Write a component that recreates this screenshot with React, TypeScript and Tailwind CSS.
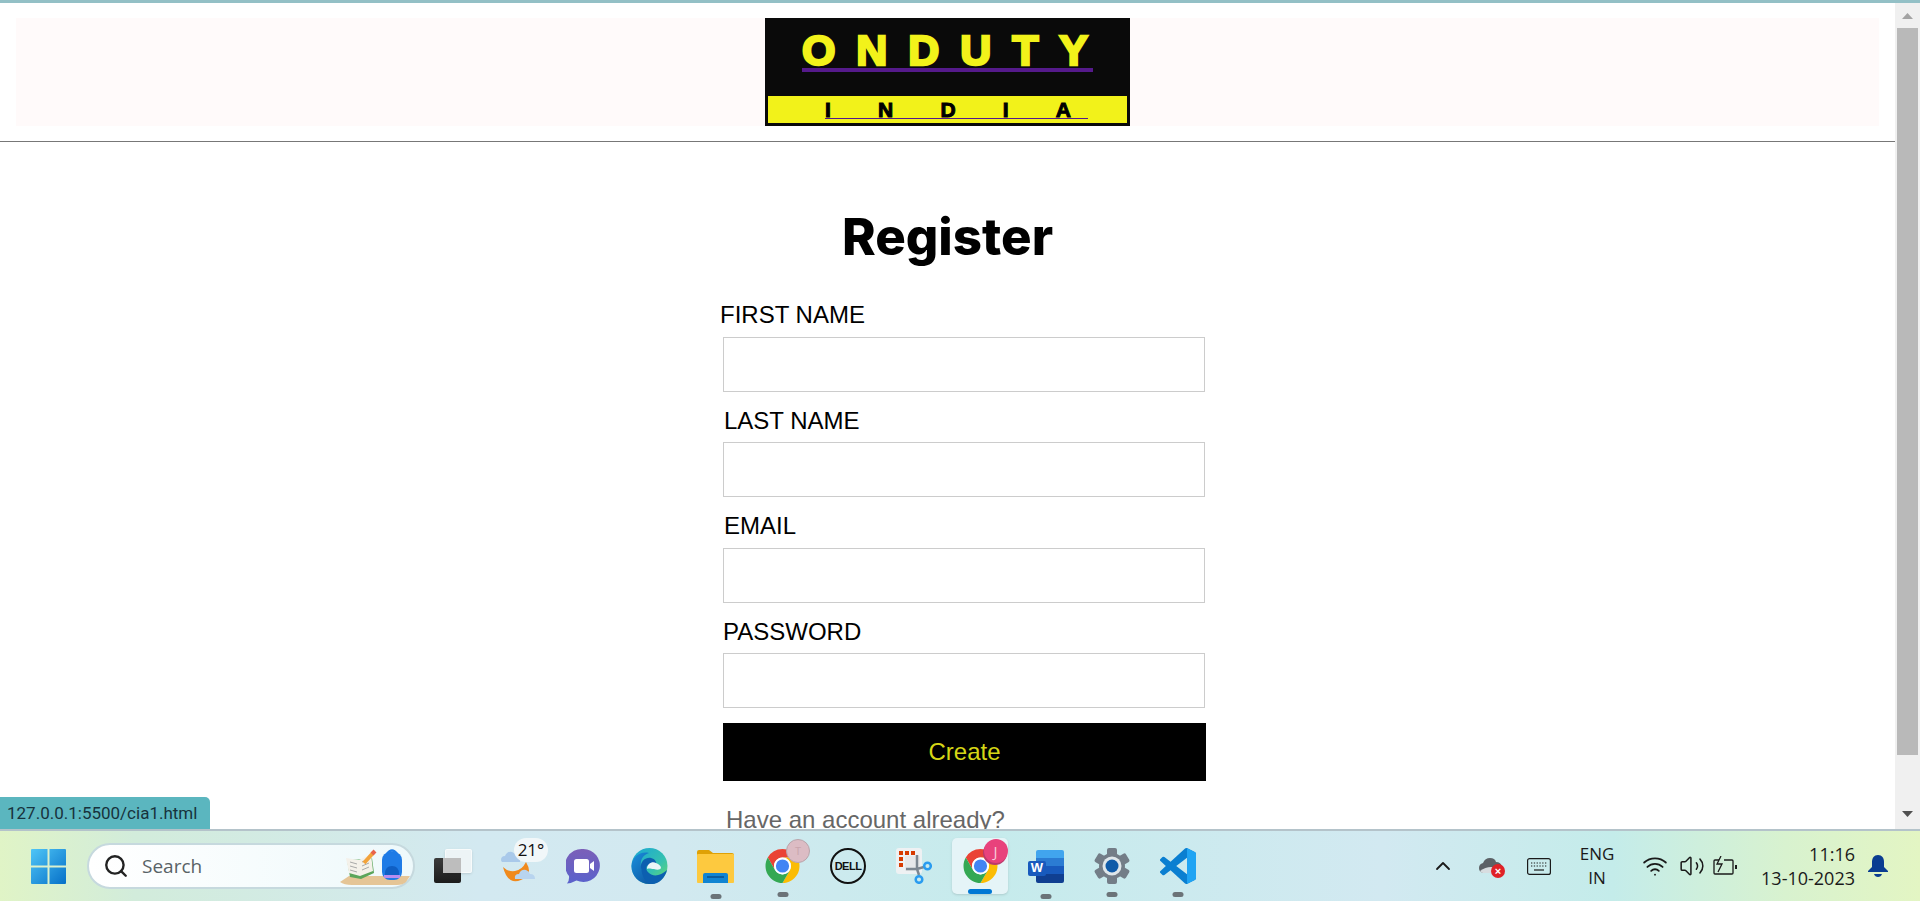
import { ChevronUp, Search, Volume2, Wifi } from 'lucide-react'
import type { ReactNode } from 'react'

const fields = [
  { label: 'FIRST NAME', labelClass: '-ml-[3px] mb-2' },
  { label: 'LAST NAME', labelClass: 'ml-px mt-px mb-[7px]' },
  { label: 'EMAIL', labelClass: 'ml-px mb-2' },
  { label: 'PASSWORD', labelClass: 'mt-px mb-[7px]' },
]

function ChromeIcon() {
  return (
    <svg viewBox="0 0 36 36" className="w-full h-full">
      <path fill="#ea4335" d="M18 1a17 17 0 0 1 14.72 8.5H18a8.5 8.5 0 0 0-7.36 12.75L3.28 9.5A17 17 0 0 1 18 1z" />
      <path fill="#fbbc04" d="M32.72 9.5A17 17 0 0 1 18 35l7.36-12.75A8.5 8.5 0 0 0 18 9.5z" />
      <path fill="#34a853" d="M3.28 9.5l7.36 12.75a8.5 8.5 0 0 0 14.72 0L18 35A17 17 0 0 1 3.28 9.5z" />
      <circle cx="18" cy="18" r="8.5" fill="#fff" />
      <circle cx="18" cy="18" r="6.6" fill="#4285f4" />
    </svg>
  )
}

function WindowsIcon() {
  return (
    <svg viewBox="0 0 35 35" className="w-[35px] h-[35px]">
      <defs>
        <linearGradient id="win" x1="0" y1="0" x2="1" y2="1">
          <stop offset="0" stopColor="#4fc6f7" />
          <stop offset="1" stopColor="#0670c8" />
        </linearGradient>
      </defs>
      <path fill="url(#win)" d="M1 0h15.5v16.5H0V1a1 1 0 0 1 1-1zM18.5 0H34a1 1 0 0 1 1 1v15.5H18.500zM0 18.500h16.500V35H1a1 1 0 0 1-1-1zM18.500 18.500H35V34a1 1 0 0 1-1 1H18.500z" />
    </svg>
  )
}

function SearchArt() {
  return (
    <svg viewBox="0 0 70 40" className="absolute right-[3px] top-[3px] w-[70px] h-[40px]">
      <path fill="#e5c596" d="M0 34 9 28h61l-4 6q-3 3-9 3H12Q4 37 0 34z" />
      <path fill="#5ba55b" d="M7 12l3 17 11 2 13-6-2-15-2 1z" />
      <path fill="#f4f1ea" d="M6 10l13 2 12-6 2 17-13 5-11-3z" />
      <path stroke="#a9a9a9" strokeWidth="1" fill="none" d="M10 14l7 2M10 18l7 2M10 22l7 2M22 14l7-3M22 18l7-3M22 22l7-3" />
      <path stroke="#f2a33c" strokeWidth="4" d="M24 15 33 5" />
      <path stroke="#e8644c" strokeWidth="4" d="M32 6l3-3" />
      <rect x="42" y="4" width="20" height="28" rx="8" fill="#1e7be6" />
      <path d="M47 6q5-7 10 0" fill="none" stroke="#1e7be6" strokeWidth="2.500" />
      <path d="M45 26q0-8 7-8t7 8v3H45z" fill="#0f5fc4" />
      <rect x="44" y="27" width="16" height="3" fill="#b78df0" />
    </svg>
  )
}

function TaskView() {
  return (
    <div className="relative w-[38px] h-[34px]">
      <div className="absolute left-0 bottom-0 w-[27px] h-[25px] rounded-[2px] bg-gradient-to-b from-[#3b3b3b] to-[#1c1c1c]" />
      <div className="absolute right-0 top-0 w-[27px] h-[24px] rounded-[2px] bg-[#f4f6f7]/80 border border-white/60 shadow-sm" />
      <div className="absolute left-[9px] top-[9px] w-[18px] h-[15px] bg-[#bdbdbd]" />
    </div>
  )
}

function Weather() {
  return (
    <div className="relative w-[38px] h-[36px]">
      <svg viewBox="0 0 38 36" className="w-full h-full">
        <path fill="#f08a1d" d="M3 19Q8 24 15 23 22 22 26 14 32 24 26 29 20 34 13 33 6 31 3 19z" />
        <path fill="#a9c9ea" d="M1 12q0-4 4-4 2-5 7-4 3 1 4 4 4 0 4 4v2H2q-1-1-1-2z" />
        <path fill="#b8d4ef" d="M15 31q-1-5 4-5 2-5 7-4 3 1 4 4 5 0 5 5z" />
      </svg>
      <div className="absolute -right-[10px] -top-[10px] w-[34px] h-[24px] rounded-full bg-[#f4f8fa]/90 flex items-center justify-center text-[17px] text-[#111] font-['Open_Sans',sans-serif]">
        21°
      </div>
    </div>
  )
}

function Teams() {
  return (
    <svg viewBox="0 0 35 36" className="w-[35px] h-[36px]">
      <defs>
        <linearGradient id="teams" x1="0" y1="0" x2="0" y2="1">
          <stop offset="0" stopColor="#7b5fb8" />
          <stop offset="1" stopColor="#5a62cc" />
        </linearGradient>
      </defs>
      <path fill="url(#teams)" d="M17.500 1a16.500 16.500 0 1 1-7 31.500Q6 35 1 35.500q2.500-3 2-7.500A16.500 16.500 0 0 1 17.500 1z" />
      <rect x="8" y="11" width="15" height="14" rx="2.500" fill="#fff" />
      <path fill="#fff" d="M24 16l4-3v10l-4-3z" />
    </svg>
  )
}

function Edge() {
  return (
    <svg viewBox="0 0 37 36" className="w-[37px] h-[36px]">
      <defs>
        <linearGradient id="edgeTop" x1="0" y1="0" x2="1" y2="1">
          <stop offset="0" stopColor="#19a6d6" />
          <stop offset="0.600" stopColor="#35c1b0" />
          <stop offset="1" stopColor="#6fdc62" />
        </linearGradient>
        <linearGradient id="edgeLow" x1="0" y1="0" x2="1" y2="1">
          <stop offset="0" stopColor="#1a8fdc" />
          <stop offset="1" stopColor="#0b4d98" />
        </linearGradient>
      </defs>
      <circle cx="18.500" cy="18" r="18" fill="url(#edgeTop)" />
      <path fill="url(#edgeLow)" d="M.5 18C1 9 9 3 18 5c-7 2-9 8-8 14 1 8 8 15 18 14Q24 36 18.500 36C8 36 .5 28 .5 18z" />
      <path fill="#0c5fb0" d="M10 20c-1-7 5-11 10-10 4 1 6 4 5 7h-7c-3 0-4 5 0 8 4 4 12 3 18-3-2 8-8 14-15 14C14 36 11 27 10 20z" />
      <path fill="#eaf5f8" d="M16 21c0-5 5-8 9-6 3 1 5 3 5 5-1 2-4 2-7 1-3 0-5-1-7 0z" />
    </svg>
  )
}

function Folder() {
  return (
    <svg viewBox="0 0 37 33" className="w-[37px] h-[33px]">
      <path fill="#dfa106" d="M0 2a2 2 0 0 1 2-2h10l4 3h19a2 2 0 0 1 2 2v4H0z" />
      <rect y="4" width="37" height="29" rx="1" fill="#fdc93f" />
      <path fill="#1184d2" d="M6 25q0-2 2-2h21q2 0 2 2v8H6z" />
      <rect x="10" y="26" width="17" height="2" fill="#0a5da0" />
    </svg>
  )
}

function Dell() {
  return (
    <div className="w-[36px] h-[36px] rounded-full border-2 border-[#111] flex items-center justify-center text-[11px] font-bold tracking-[-0.5px] text-[#111] font-['Liberation_Sans',sans-serif]">
      DELL
    </div>
  )
}

function Snip() {
  return (
    <svg viewBox="0 0 36 36" className="w-[36px] h-[36px]">
      <rect width="26" height="26" rx="3" fill="#eef1f3" />
      <rect x="9" y="8" width="15" height="15" rx="1" fill="#e6e8ea" />
      <path fill="#d83b01" d="M3 3h4v4H3zM9 3h4v4H9zM15 3h4v4h-4zM3 9h4v4H3zM3 15h4v4H3z" />
      <path stroke="#7c8791" strokeWidth="2.500" d="M21 7v14l2 6M10 21h11l7-2" fill="none" />
      <circle cx="31.500" cy="18" r="3.300" fill="none" stroke="#2a9cf0" strokeWidth="2.500" />
      <circle cx="23" cy="31.500" r="3.300" fill="none" stroke="#2a9cf0" strokeWidth="2.500" />
    </svg>
  )
}

function Word() {
  return (
    <div className="relative w-[36px] h-[33px]">
      <div className="absolute right-0 top-0 w-[28px] h-full rounded-[2px] flex flex-col overflow-hidden">
        <div className="flex-1 bg-[#41a5ee]" />
        <div className="flex-1 bg-[#2b7cd3]" />
        <div className="flex-1 bg-[#185abd]" />
        <div className="flex-1 bg-[#103f91]" />
      </div>
      <div className="absolute left-0 top-[11px] w-[18px] h-[15px] rounded-[2px] bg-[#185abd] flex items-center justify-center text-white text-[13px] font-bold font-['Liberation_Sans',sans-serif]">
        W
      </div>
    </div>
  )
}

function Gear() {
  return (
    <svg viewBox="0 0 36 36" className="w-[36px] h-[36px]">
      <circle cx="18" cy="18" r="13" fill="#737d87" />
      <g fill="#737d87">
        <rect x="13" y="0" width="10" height="36" rx="2" />
        <rect x="13" y="0" width="10" height="36" rx="2" transform="rotate(60 18 18)" />
        <rect x="13" y="0" width="10" height="36" rx="2" transform="rotate(120 18 18)" />
      </g>
      <circle cx="18" cy="18" r="9.500" fill="#dfe7ea" />
      <circle cx="18" cy="18" r="6.500" fill="#0f5ba8" />
    </svg>
  )
}

function VsCode() {
  return (
    <svg viewBox="0 0 24 24" className="w-[36px] h-[36px]">
      <path fill="#0a7fd1" d="M23.150 2.587L18.210.21a1.494 1.494 0 0 0-1.705.29l-9.460 8.630-4.120-3.128a.999.999 0 0 0-1.276.057L.327 7.261A1 1 0 0 0 .326 8.740L3.899 12 .326 15.260a1 1 0 0 0 .001 1.479L1.650 17.940a.999.999 0 0 0 1.276.057l4.120-3.128 9.460 8.630a1.492 1.492 0 0 0 1.704.29l4.942-2.377A1.500 1.500 0 0 0 24 20.060V3.939a1.500 1.500 0 0 0-.850-1.352zm-5.146 14.861L10.826 12l7.178-5.448v10.896z" />
      <path fill="#20a4f3" d="M18.004 0.070a1.500 1.500 0 0 1 .206.140l4.940 2.377A1.500 1.500 0 0 1 24 3.939V20.060a1.500 1.500 0 0 1-.850 1.353l-4.940 2.377a1.500 1.500 0 0 1-.206.140z" />
    </svg>
  )
}

function OneDriveError() {
  return (
    <div className="relative w-[24px] h-[18px]">
      <svg viewBox="0 0 24 18" className="w-full h-full">
        <path fill="#5c6166" d="M4 16Q0 15 0 11q0-4 4-5 2-5 7-5 5 0 6 4 5 0 6 5v6z" />
        <path fill="#d8dde0" d="M1 14q8-6 17-3l-4 5H4q-2 0-3-2z" />
      </svg>
      <div className="absolute -right-[2px] -bottom-[3px] w-[14px] h-[14px] rounded-full bg-[#e02127] flex items-center justify-center text-white text-[11px] leading-none font-bold font-['Liberation_Sans',sans-serif]">
        ×
      </div>
    </div>
  )
}

function KeyboardIcon() {
  return (
    <svg viewBox="0 0 24 17" className="w-[24px] h-[17px]" fill="none" stroke="#1a1a1a" strokeWidth="1.200">
      <rect x="0.600" y="0.600" width="22.800" height="15.800" rx="2" />
      <path strokeDasharray="1.300 1.500" d="M4 5h16M4 8h16" />
      <path d="M7 12h10" />
    </svg>
  )
}

function BatteryCharge() {
  return (
    <svg viewBox="0 0 24 20" className="w-[24px] h-[20px]" fill="none" stroke="#1a1a1a" strokeWidth="1.300">
      <path d="M6 4H2a1 1 0 0 0-1 1v12a1 1 0 0 0 1 1h17a1 1 0 0 0 1-1V5a1 1 0 0 0-1-1H11" />
      <path fill="#1a1a1a" d="M22 9h2v4h-2z" stroke="none" />
      <path d="M8 0 4 8h5l-4 8" />
    </svg>
  )
}

function TaskIcon({ className, dot, children }: { className: string; dot?: boolean; children: ReactNode }) {
  return (
    <div className={`relative flex items-center justify-center ${className}`}>
      {children}
      {dot && <div className="absolute left-1/2 -translate-x-1/2 top-[44px] w-[11px] h-[5px] rounded-full bg-[#6b7378]" />}
    </div>
  )
}

function Taskbar() {
  return (
    <div className="h-[72px] shrink-0 border-t-2 border-[#b4c3ca] flex items-center bg-[linear-gradient(90deg,#e0f4c6_0%,#d2ecdb_7%,#d3e9f1_25%,#d2e9f0_35%,#c6ebec_52%,#d2e9f1_72%,#c4ecea_84%,#d8f2cf_93%,#e3f5c3_100%)] font-['Open_Sans',sans-serif]">
      <div className="ml-[31px]">
        <WindowsIcon />
      </div>
      <div className="relative ml-[21px] w-[328px] h-[46px] rounded-full border-2 border-[#c6d9de] bg-gradient-to-r from-white to-[#eef9fb] flex items-center">
        <Search className="ml-[14px] w-[26px] h-[26px] text-[#222]" strokeWidth={2.200} />
        <span className="ml-[13px] text-[19px] text-[#596266]">Search</span>
        <SearchArt />
      </div>
      <TaskIcon className="ml-[19px] w-[38px]">
        <TaskView />
      </TaskIcon>
      <TaskIcon className="ml-[28px] w-[38px]">
        <Weather />
      </TaskIcon>
      <TaskIcon className="ml-[28px] w-[35px]">
        <Teams />
      </TaskIcon>
      <TaskIcon className="ml-[30px] w-[37px]">
        <Edge />
      </TaskIcon>
      <TaskIcon dot className="ml-[29px] w-[37px]">
        <Folder />
      </TaskIcon>
      <TaskIcon dot className="ml-[30px] w-[37px] h-[36px]">
        <ChromeIcon />
        <div className="absolute -right-[9px] -top-[9px] w-[24px] h-[24px] rounded-full bg-[#dcbcc4] border border-[#b9a5ab] flex items-center justify-center text-[11px] text-[#c9a5ad]">
          T
        </div>
      </TaskIcon>
      <TaskIcon className="ml-[29px] w-[36px]">
        <Dell />
      </TaskIcon>
      <TaskIcon className="ml-[30px] w-[36px]">
        <Snip />
      </TaskIcon>
      <div className="relative ml-[20px] w-[56px] h-[56px] rounded-[5px] bg-[#e5f4f7] shadow-sm flex items-center justify-center">
        <div className="relative w-[37px] h-[36px]">
          <ChromeIcon />
          <div className="absolute -right-[8px] -top-[7px] w-[24px] h-[24px] rounded-full bg-[#b93a6c]" />
          <div className="absolute -right-[9px] -top-[9px] w-[24px] h-[24px] rounded-full bg-[#e8427c] flex items-center justify-center text-[15px] text-[#f8c9da]">
            J
          </div>
        </div>
        <div className="absolute bottom-0 left-[16px] w-[24px] h-[5px] rounded-full bg-[#0078d4]" />
      </div>
      <TaskIcon dot className="ml-[20px] w-[36px]">
        <Word />
      </TaskIcon>
      <TaskIcon dot className="ml-[30px] w-[36px]">
        <Gear />
      </TaskIcon>
      <TaskIcon dot className="ml-[30px] w-[36px]">
        <VsCode />
      </TaskIcon>

      <ChevronUp className="ml-[235px] w-[24px] h-[24px] text-[#1a1a1a]" strokeWidth={1.800} />
      <div className="ml-[24px]">
        <OneDriveError />
      </div>
      <div className="ml-[24px] w-[26px] flex justify-start">
        <KeyboardIcon />
      </div>
      <div className="ml-[23px] w-[42px] text-center text-[17px] leading-[24px] text-[#1a1a1a]">
        <div>ENG</div>
        <div>IN</div>
      </div>
      <Wifi className="ml-[24px] w-[26px] h-[26px] text-[#1a1a1a]" strokeWidth={1.700} />
      <Volume2 className="ml-[11px] w-[26px] h-[26px] text-[#1a1a1a]" strokeWidth={1.400} />
      <div className="ml-[8px]">
        <BatteryCharge />
      </div>
      <div className="ml-[24px] w-[94px] text-right text-[18px] leading-[24px] text-[#1a1a1a] whitespace-nowrap">
        <div>11:16</div>
        <div>13-10-2023</div>
      </div>
      <svg viewBox="0 0 20 24" className="ml-[13px] w-[20px] h-[24px]">
        <path fill="#0a3d91" d="M10 1c4 0 6 3 6 7v5l4 4v1H0v-1l4-4V8c0-4 2-7 6-7z" />
        <path fill="#0a3d91" d="M6 20h8q-1 3-4 3t-4-3z" />
      </svg>
    </div>
  )
}

function Scrollbar() {
  return (
    <div className="w-[25px] shrink-0 bg-[#f0f0f0] flex flex-col items-center">
      <div className="h-[25px] w-full flex items-center justify-center">
        <svg viewBox="0 0 11 6" className="w-[11px] h-[6px]">
          <path fill="#a3a3a3" d="M5.500 0 11 6H0z" />
        </svg>
      </div>
      <div className="w-[21px] h-[727px] bg-[#b9b9b9]" />
      <div className="flex-1 w-full flex items-center justify-center pt-[44px]">
        <svg viewBox="0 0 11 6" className="w-[11px] h-[6px]">
          <path fill="#505050" d="M0 0h11L5.500 6z" />
        </svg>
      </div>
    </div>
  )
}

function Logo() {
  return (
    <div className="w-[365px] h-[108px] bg-[#0a0a0a] flex flex-col font-['Liberation_Sans',sans-serif] font-bold">
      <div className="h-[78px] px-[37px] pt-[18px]">
        <div className="w-[291px] border-b-4 border-[#551a8b] h-[36px] pr-[5px] pb-[3px] flex justify-between items-center text-[43px] leading-none text-[#f2f21a] [-webkit-text-stroke:2.5px_#f2f21a]">
          {'ONDUTY'.split('').map((c, i) => (
            <span key={i}>{c}</span>
          ))}
        </div>
      </div>
      <div className="mx-[3px] mb-[3px] flex-1 bg-[#f2f21a] pl-[57px] pt-[5px]">
        <div className="w-[263px] h-[18px] border-b border-[#551a8b] flex justify-between pr-[17px] items-center text-[21px] leading-none text-black [-webkit-text-stroke:1px_#000]">
          {'INDIA'.split('').map((c, i) => (
            <span key={i}>{c}</span>
          ))}
        </div>
      </div>
    </div>
  )
}

export default function App() {
  return (
    <div className="h-[901px] w-[1920px] flex flex-col overflow-hidden bg-white">
      <div className="h-[3px] shrink-0 bg-[#93c0c6]" />
      <div className="flex flex-1 min-h-0">
        <main className="relative flex-1 overflow-hidden">
          <header className="pt-[15px]">
            <div className="mx-4 h-[108px] bg-[#fffafa] flex justify-center">
              <Logo />
            </div>
            <div className="mt-[15px] h-px bg-[#777]" />
          </header>

          <h1 className="mt-[65px] text-center text-[51px] leading-[60px] font-extrabold text-black font-['Inter',sans-serif]">
            Register
          </h1>

          <form className="mt-[34px] ml-[723px] w-[482px] flex flex-col gap-[14.33px] font-['Liberation_Sans',sans-serif]">
            {fields.map((field) => (
              <div key={field.label}>
                <label className={`block text-[24px] leading-7 text-black ${field.labelClass}`}>
                  {field.label}
                </label>
                <input className="block w-full h-[55px] border border-[#ccc] bg-white" />
              </div>
            ))}
            <button type="button" className="mt-px w-[483px] h-[58px] bg-black text-[24px] text-[#d6d616]">
              Create
            </button>
            <p className="mt-[10px] ml-[3px] text-[24px] leading-7 text-[#666]">Have an account already?</p>
          </form>

          <div className="absolute left-0 bottom-0 w-[210px] h-[32px] rounded-tr-[5px] bg-[#5bb6bf] pl-[7px] text-[17px] leading-[32px] text-[#17323c] font-['Roboto',sans-serif]">
            127.0.0.1:5500/cia1.html
          </div>
        </main>
        <Scrollbar />
      </div>
      <Taskbar />
    </div>
  )
}
